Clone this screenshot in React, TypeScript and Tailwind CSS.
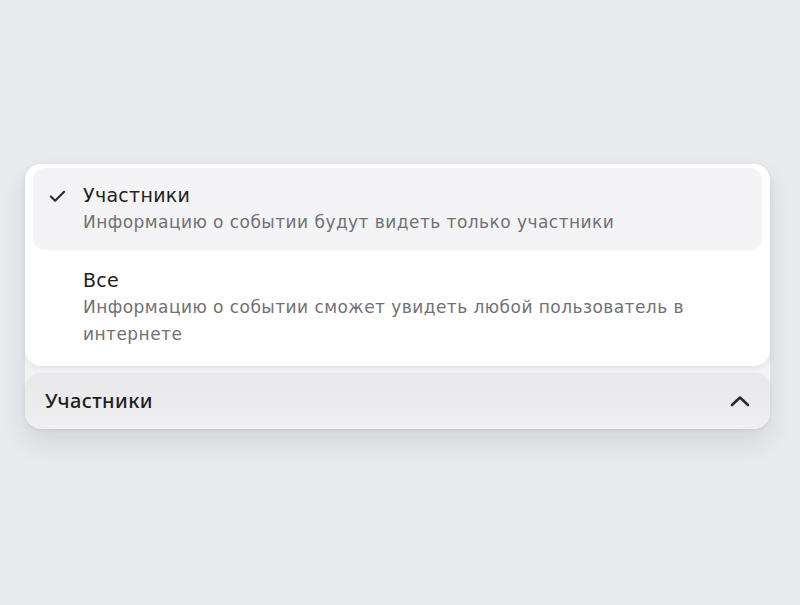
import { useState } from "react";

type Option = {
  value: string;
  title: string;
  description: string;
};

const OPTIONS: Option[] = [
  {
    value: "members",
    title: "Участники",
    description: "Информацию о событии будут видеть только участники",
  },
  {
    value: "all",
    title: "Все",
    description:
      "Информацию о событии сможет увидеть любой пользователь в интернете",
  },
];

function CheckIcon() {
  return (
    <svg width="18" height="14" viewBox="0 0 18 14" fill="none">
      <path
        d="M2 7.5L6.5 12L16 2.5"
        stroke="#2b2b2e"
        strokeWidth="2.2"
        strokeLinecap="round"
        strokeLinejoin="round"
      />
    </svg>
  );
}

function ChevronUp() {
  return (
    <svg width="20" height="12" viewBox="0 0 20 12" fill="none">
      <path
        d="M2 10L10 2.5L18 10"
        stroke="#2b2b2e"
        strokeWidth="2.6"
        strokeLinecap="round"
        strokeLinejoin="round"
      />
    </svg>
  );
}

export default function App() {
  const [selected, setSelected] = useState("members");
  const current = OPTIONS.find((o) => o.value === selected) ?? OPTIONS[0];

  return (
    <div
      className="h-[605px] w-full bg-[#e9eaee] pl-[25px] pr-[30px] pt-[164px]"
      style={{ fontFamily: '"DejaVu Sans", "Noto Sans", sans-serif' }}
    >
      <div className="flex flex-col gap-[7px] rounded-[16px] bg-[#f3f3f5] shadow-[0_14px_24px_rgba(40,40,60,0.10)]">
        <ul className="flex flex-col gap-[3px] rounded-[16px] bg-white px-2 pt-[4px] pb-[4px] shadow-[0_2px_6px_rgba(40,40,60,0.08)]">
          {OPTIONS.map((option) => {
            const active = option.value === selected;
            return (
              <li key={option.value}>
                <button
                  type="button"
                  onClick={() => setSelected(option.value)}
                  className={
                    active
                      ? "flex w-full items-start gap-[17px] rounded-[12px] bg-[#f4f4f6] px-4 pt-[15px] pb-[14px] text-left"
                      : "flex w-full items-start gap-[17px] rounded-[12px] px-4 pt-[15px] pb-[14px] text-left"
                  }
                >
                  <span className="flex h-[25px] w-[17px] shrink-0 items-center justify-center">
                    {active && <CheckIcon />}
                  </span>
                  <span className="flex flex-col">
                    <span className="text-[19px] leading-[25px] tracking-[0.3px] text-[#1f1f22]">
                      {option.title}
                    </span>
                    <span className="mt-[1px] text-[17px] leading-[27px] tracking-[0.45px] text-[#707076]">
                      {option.description}
                    </span>
                  </span>
                </button>
              </li>
            );
          })}
        </ul>
        <button
          type="button"
          className="flex h-[56px] w-full items-center justify-between rounded-[16px] bg-gradient-to-b from-[#e8e8ea] to-[#efeff1] pl-5 pr-[20px] shadow-[0_1px_3px_rgba(40,40,60,0.10)]"
        >
          <span
            className="text-[20px] font-medium tracking-[0.4px] text-[#202023]"
            style={{ fontFamily: '"Noto Sans", sans-serif' }}
          >
            {current.title}
          </span>
          <ChevronUp />
        </button>
      </div>
    </div>
  );
}
